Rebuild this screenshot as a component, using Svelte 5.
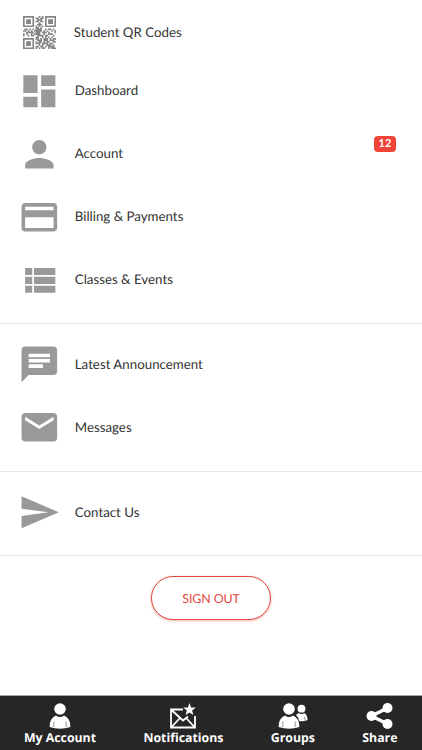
<script lang="ts">
	// 21x21 modules, # is a filled one
	const qrRows = [
		'#######...#.#.#######',
		'#.....#.##.##.#.....#',
		'#.###.#..###..#.###.#',
		'#.###.#.##.##.#.###.#',
		'#.###.#...#...#.###.#',
		'#.....#..###..#.....#',
		'#######.#.#.#.#######',
		'........##.#.........',
		'.##.#.#.####..#.##.#.',
		'##.#.#.#####.#.#..#.#',
		'..#####.###.###.#...#',
		'#.#..#.####..#..###..',
		'#..#.##..####.##...#.',
		'........##..#.#.#.#..',
		'#######.##.#.###.#.##',
		'#.....#..###.###.###.',
		'#.###.#.#.##.#.##..##',
		'#.###.#.###.####.##..',
		'#.###.#...#.#..###.#.',
		'#.....#.##.##.#.####.',
		'#######.#.#.##..#.###'
	];
	const qrPath = qrRows
		.map((row, y) => [...row].map((c, x) => (c === '#' ? `M${x} ${y}h1.05v1.05h-1.05z` : '')).join(''))
		.join('');

	const groups = [
		[
			{ label: 'Dashboard', icon: 'M3 13h8V3H3v10zm0 8h8v-6H3v6zm10 0h8V11h-8v10zm0-18v6h8V3h-8z' },
			{
				label: 'Account',
				badge: 12,
				icon: 'M12 12c2.21 0 4-1.79 4-4s-1.79-4-4-4-4 1.79-4 4 1.79 4 4 4zm0 2c-2.67 0-8 1.34-8 4v2h16v-2c0-2.66-5.33-4-8-4z'
			},
			{
				label: 'Billing & Payments',
				icon: 'M20 4H4c-1.11 0-1.99.89-1.99 2L2 18c0 1.11.89 2 2 2h16c1.11 0 2-.89 2-2V6c0-1.11-.89-2-2-2zm0 14H4v-6h16v6zm0-10H4V6h16v2z'
			},
			{
				label: 'Classes & Events',
				icon: 'M4 14h4v-4H4v4zm0 5h4v-4H4v4zM4 9h4V5H4v4zm5 5h12v-4H9v4zm0 5h12v-4H9v4zM9 5v4h12V5H9z'
			}
		],
		[
			{
				label: 'Latest Announcement',
				icon: 'M20 2H4c-1.1 0-1.99.9-1.99 2L2 22l4-4h14c1.1 0 2-.9 2-2V4c0-1.1-.9-2-2-2zM6 9h12v2H6V9zm8 5H6v-2h8v2zm4-6H6V6h12v2z'
			},
			{
				label: 'Messages',
				icon: 'M20 4H4c-1.1 0-1.99.9-1.99 2L2 18c0 1.1.9 2 2 2h16c1.1 0 2-.9 2-2V6c0-1.1-.9-2-2-2zm0 4l-8 5-8-5V6l8 5 8-5v2z'
			}
		],
		[{ label: 'Contact Us', icon: 'M2.01 21L23 12 2.01 3 2 10l15 2-15 2z' }]
	];
</script>

<div class="screen">
	<main>
		<a class="item first" href="#top">
			<svg class="qr" viewBox="0 0 21 21"><path d={qrPath} /></svg>
			<span>Student QR Codes</span>
		</a>
		{#each groups as items}
			<nav class="group">
				{#each items as item}
					<a class="item" href="#top">
						<svg class="icon" viewBox="0 0 24 24"><path d={item.icon} /></svg>
						<span>{item.label}</span>
						{#if item.badge}
							<b class="badge">{item.badge}</b>
						{/if}
					</a>
				{/each}
			</nav>
		{/each}
		<button class="signout">SIGN OUT</button>
	</main>

	<footer>
		<a class="tab" href="#top">
			<svg width="22" height="26" viewBox="0 0 22 26">
				<circle cx="11" cy="6" r="5.8" />
				<path d="M7 12.4Q11 15.5 15 12.4Q21.4 15 21.4 24Q11 27.5 .6 24Q.6 15 7 12.4z" />
				<path class="cut" d="M4.8 18.5V24M17.2 18.5V24" />
			</svg>
			<span>My Account</span>
		</a>
		<a class="tab" href="#top">
			<svg width="28" height="26" viewBox="0 0 28 26">
				<path class="line" d="M14 6.5H2v18h24V13M2.5 7L14 17.5l5-4M2.5 24l8-8.5M25.5 24l-8-8.5" />
				<path d="M20.5 0l1.6 4.4 4.7.1-3.7 2.9 1.3 4.6-3.9-2.6-3.9 2.6 1.3-4.6-3.7-2.9 4.7-.1z" />
			</svg>
			<span>Notifications</span>
		</a>
		<a class="tab" href="#top">
			<svg width="30" height="26" viewBox="0 0 30 26">
				<circle cx="23.5" cy="5.7" r="3.9" />
				<path d="M20.5 10q3 2 6 0q3 2 3 7q-4 2-8.5 1q-.5-4-3-6z" />
				<circle cx="11" cy="6" r="5.8" />
				<path d="M7 12.4Q11 15.5 15 12.4Q21.4 15 21.4 24Q11 27.5 .6 24Q.6 15 7 12.4z" />
				<path class="cut" d="M4.8 18.5V24M17.2 18.5V24M26.8 14v3.5" />
			</svg>
			<span>Groups</span>
		</a>
		<a class="tab" href="#top">
			<svg width="27" height="26" viewBox="0 0 27 26">
				<circle cx="21.5" cy="5" r="5" />
				<circle cx="5.5" cy="13" r="5" />
				<circle cx="21.5" cy="21" r="5" />
				<path class="link" d="M21.5 5L5.5 13l16 8" />
			</svg>
			<span>Share</span>
		</a>
	</footer>
</div>

<style>
	:global(body) {
		background: #fff;
	}

	.screen {
		display: flex;
		flex-direction: column;
		height: 750px;
		font-family: Lato, sans-serif;
		color: #333;
		text-rendering: geometricPrecision;
	}

	main {
		flex: 1;
		display: flex;
		flex-direction: column;
	}

	a {
		color: inherit;
		text-decoration: none;
	}

	.item {
		display: flex;
		align-items: center;
		height: 63px;
		padding: 0 26px 0 17.6px;
		font-size: 13.3px;
	}

	.item.first {
		height: 49px;
		padding: 8px 0 0 22.5px;
	}

	.item.first span {
		margin-left: 18.3px;
	}

	.item span {
		margin: -1px 0 0 14.5px;
	}

	.qr {
		width: 33px;
		height: 33px;
		fill: #858585;
	}

	.icon {
		width: 42.7px;
		height: 42.7px;
		fill: #999;
	}

	.group {
		padding: 9px 0 12px;
		border-bottom: 1px solid #e6e6e6;
	}

	.item.first + .group {
		padding: 2.4px 0 11.6px;
	}

	.group:last-of-type {
		padding-bottom: 11px;
	}

	.badge {
		margin: -20px 0 0 auto;
		width: 22px;
		height: 16px;
		border-radius: 4px;
		background: #f04438;
		color: #fff;
		font-size: 11px;
		line-height: 16px;
		text-align: center;
	}

	.signout {
		align-self: center;
		width: 120px;
		height: 44px;
		margin-top: 20.4px;
		padding: 0;
		border: 1px solid #e2483d;
		border-radius: 22px;
		background: #fff;
		box-shadow: 0 1px 3px rgba(226, 72, 61, 0.4);
		color: #e2483d;
		font: 12.4px Lato, sans-serif;
		letter-spacing: -0.1px;
		text-rendering: geometricPrecision;
	}

	footer {
		display: flex;
		justify-content: space-between;
		box-sizing: border-box;
		height: 55px;
		padding: 7px 24.5px 0 24px;
		border-top: 1px solid #a3a6a3;
		background: #262626;
		color: #fff;
		font: bold 12.3px/17px 'Open Sans', sans-serif;
	}

	.tab {
		display: flex;
		flex-direction: column;
		align-items: center;
	}

	.tab svg {
		fill: #fff;
	}

	.tab .cut {
		stroke: #777;
		stroke-width: 0.8;
	}

	.tab .line {
		fill: none;
		stroke: #fff;
		stroke-width: 1.8;
	}

	.tab .link {
		fill: none;
		stroke: #fff;
		stroke-width: 3.5;
	}
</style>
